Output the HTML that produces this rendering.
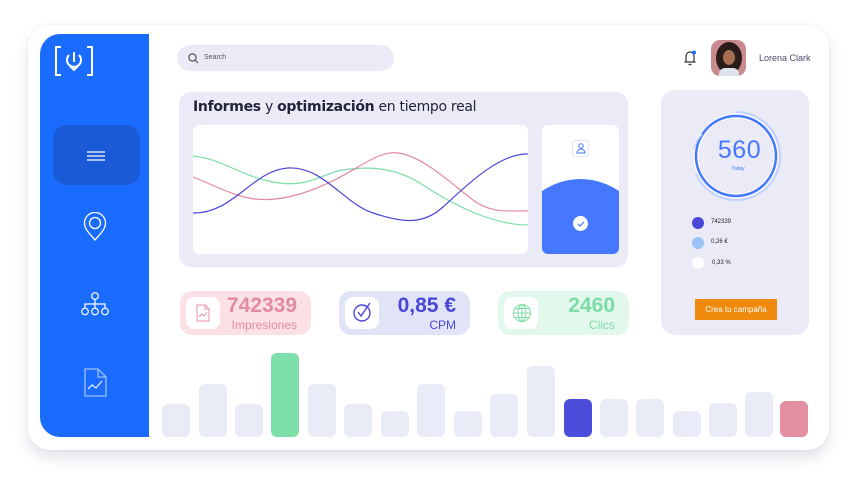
<!DOCTYPE html>
<html><head><meta charset="utf-8"><style>
*{margin:0;padding:0;box-sizing:border-box}
body{width:867px;height:492px;background:#fff;position:relative;overflow:hidden;font-family:"Liberation Sans",sans-serif}
.abs{position:absolute}
.card{left:28px;top:25px;width:801px;height:425px;background:#fff;border-radius:22px;box-shadow:0 8px 14px rgba(120,130,160,.22),0 0 3px rgba(0,0,0,.06)}
.side{left:40px;top:34px;width:109px;height:403px;background:#1a6cff;border-radius:20px 0 0 20px}
.bar{position:absolute;width:28px;border-radius:6px;background:#e9ebf7;bottom:55px}
.pill{border-radius:12px;height:44px;top:291px}
.ib{position:absolute;left:6px;top:6px;width:34px;height:32px;background:#fff;border-radius:8px}
.num{position:absolute;right:14px;top:3px;font-weight:bold;font-size:21px}
.lab{position:absolute;right:14px;top:27px;font-size:12px}
</style></head><body>
<div class="abs card"></div>
<div class="abs side"></div>
<!-- logo -->
<svg class="abs" style="left:55px;top:46px" width="38" height="30" viewBox="0 0 38 30" fill="none" stroke="#fff" stroke-width="2"><path d="M6 1H1V29H6M32 1H37V29H32"/><path d="M14 9a7 7 0 1 0 10 0"/><path d="M19 6V16"/><path d="M15 20l4 4 4-4"/></svg>
<div class="abs" style="left:53px;top:125px;width:87px;height:60px;background:#1a5ad6;border-radius:14px"></div>
<svg class="abs" style="left:87px;top:150px" width="18" height="12" stroke="#fff" stroke-width="1.3"><path d="M0 2H18M0 6H18M0 10H18"/></svg>
<svg class="abs" style="left:83px;top:212px" width="24" height="30" fill="none" stroke="#fff" stroke-width="1.3"><path d="M12 28C6 21 1.5 17 1.5 11a10.5 10.5 0 0 1 21 0c0 6-4.5 10-10.5 17z"/><circle cx="12" cy="11" r="5.5"/></svg>
<svg class="abs" style="left:80px;top:292px" width="30" height="26" fill="none" stroke="#fff" stroke-width="1.2"><circle cx="15" cy="4" r="3.3"/><path d="M15 7.5V12M5 16V12H25V16M15 12V16"/><circle cx="5" cy="19.5" r="3.3"/><circle cx="15" cy="19.5" r="3.3"/><circle cx="25" cy="19.5" r="3.3"/></svg>
<svg class="abs" style="left:84px;top:368px" width="24" height="30" fill="none" stroke="#9fc0ff" stroke-width="1.3"><path d="M1 1H14L22 9V28H1Z M14 1V9H22"/><path d="M4 21l4-4 4 3 6-7" stroke="#dfe9ff"/></svg>
<!-- search -->
<div class="abs" style="left:177px;top:45px;width:217px;height:26px;background:#eaebf7;border-radius:13px"></div>
<svg class="abs" style="left:188px;top:53px" width="11" height="11" fill="none" stroke="#555" stroke-width="1.2"><circle cx="4.5" cy="4.5" r="3.6"/><path d="M7.2 7.2L10 10"/></svg>
<div class="abs" style="left:204px;top:54px;font-size:7px;color:#555">Search</div>
<!-- header right -->
<svg class="abs" style="left:683px;top:50px" width="14" height="16" fill="none" stroke="#333" stroke-width="1.2"><path d="M3 12V6a4 4 0 0 1 8 0v6ZM1.5 12H12.5M5.5 14.5h3"/><circle cx="11" cy="2.5" r="2" fill="#1a6cff" stroke="none"/></svg>
<div class="abs" style="left:711px;top:40px;width:35px;height:36px;border-radius:9px;background:#c98a8f;overflow:hidden"><div style="position:absolute;left:5px;top:2px;width:26px;height:32px;border-radius:50%;background:#2a1c18"></div><div style="position:absolute;left:12px;top:10px;width:12px;height:15px;border-radius:50%;background:#a66e52"></div><div style="position:absolute;left:8px;top:28px;width:20px;height:10px;border-radius:6px 6px 0 0;background:#dfe3ea"></div></div>
<div class="abs" style="left:759px;top:53px;font-size:9px;color:#4a4a6a">Lorena Clark</div>
<!-- chart panel -->
<div class="abs" style="left:179px;top:92px;width:449px;height:175px;background:#eaebf7;border-radius:12px"></div>
<div class="abs" style="left:193px;top:99px;font-size:14px;color:#23233a;font-family:'DejaVu Sans',sans-serif;letter-spacing:-.3px"><b>Informes</b> y <b>optimización</b> en tiempo real</div>
<div class="abs" style="left:193px;top:125px;width:335px;height:129px;background:#fff;border-radius:6px"></div>
<svg class="abs" style="left:193px;top:125px" width="335" height="129" fill="none" stroke-width="1.2">
<path d="M0 31C30 34 45 50 80 57S130 48 150 45S200 40 230 60S300 100 335 100" stroke="#7ddca6"/>
<path d="M0 52C40 68 60 84 110 68S180 25 205 28S260 60 280 75S320 85 335 86" stroke="#e48aa0"/>
<path d="M0 88C40 89 60 45 95 43S150 78 180 88S230 100 250 82S305 28 335 29" stroke="#4a47d8"/>
</svg>
<div class="abs" style="left:542px;top:125px;width:77px;height:129px;background:#fff;border-radius:6px;overflow:hidden"><div style="position:absolute;left:-30px;top:54px;width:137px;height:140px;border-radius:50%;background:#4578ff"></div></div>
<div class="abs" style="left:572px;top:140px;width:17px;height:17px;border:1px solid #e0e4f5;border-radius:3px"></div>
<svg class="abs" style="left:576px;top:143px" width="10" height="11" fill="none" stroke="#4578ff" stroke-width="1"><circle cx="5" cy="3" r="2.2"/><path d="M1 10a4 4 0 0 1 8 0Z"/></svg>
<div class="abs" style="left:573px;top:216px;width:15px;height:15px;border-radius:50%;background:#fff"></div>
<svg class="abs" style="left:577px;top:221px" width="8" height="6" fill="none" stroke="#4578ff" stroke-width="1.2"><path d="M1 3l2 2 4-4"/></svg>
<!-- pills -->
<div class="abs pill" style="left:180px;width:131px;background:#fbe0e6"><div class="ib"></div>
<svg class="abs" style="left:16px;top:13px" width="14" height="18" fill="none" stroke="#e890a6" stroke-width="1"><path d="M1 1H9L13 5V17H1ZM9 1V5H13"/><path d="M3 13l3-3 2 2 3-4"/></svg>
<div class="num" style="color:#e38aa0;font-size:21px">742339</div><div class="lab" style="color:#e38aa0">Impresiones</div></div>
<div class="abs pill" style="left:339px;width:131px;background:#e1e4f7"><div class="ib"></div>
<svg class="abs" style="left:13px;top:10px" width="22" height="22" fill="none" stroke="#4a47d8" stroke-width="1.4"><circle cx="10" cy="12" r="8"/><path d="M6 11l3 4 9-13"/></svg>
<div class="num" style="color:#4a47d8">0,85 €</div><div class="lab" style="color:#4a47d8">CPM</div></div>
<div class="abs pill" style="left:498px;width:131px;background:#e2f8ec"><div class="ib"></div>
<svg class="abs" style="left:14px;top:12px" width="20" height="20" fill="none" stroke="#7ddca6" stroke-width="1"><circle cx="10" cy="10" r="8.5"/><ellipse cx="10" cy="10" rx="4" ry="8.5"/><path d="M1.5 10H18.5M10 1.5V18.5M3 5.5H17M3 14.5H17"/></svg>
<div class="num" style="color:#7ddca6">2460</div><div class="lab" style="color:#7ddca6">Clics</div></div>
<!-- right panel -->
<div class="abs" style="left:661px;top:90px;width:148px;height:245px;background:#eaebf7;border-radius:14px"></div>
<svg class="abs" style="left:688px;top:108px" width="96" height="96" fill="none"><circle cx="48" cy="48" r="40" stroke="#fff" stroke-width="5"/><circle cx="48" cy="48" r="40" stroke="#4578ff" stroke-width="2.5"/><path d="M48 4A44 44 0 1 1 8 66" stroke="#c4d2ff" stroke-width="2"/><path d="M6 40a42 42 0 0 1 8 -14" stroke="#c4d2ff" stroke-width="1.5"/></svg>
<div class="abs" style="left:688px;top:136px;width:103px;text-align:center;font-size:25px;color:#4578ff;letter-spacing:.5px">560</div>
<div class="abs" style="left:688px;top:166px;width:100px;text-align:center;font-size:5px;color:#4578ff">Today</div>
<div class="abs" style="left:692px;top:217px;width:12px;height:12px;border-radius:50%;background:#4a47d8"></div>
<div class="abs" style="left:692px;top:237px;width:12px;height:12px;border-radius:50%;background:#9cc2f7"></div>
<div class="abs" style="left:692px;top:257px;width:12px;height:12px;border-radius:50%;background:#fff"></div>
<div class="abs" style="left:711px;top:219px;font-size:6px;color:#222">742339</div>
<div class="abs" style="left:711px;top:239px;font-size:6px;color:#222">0,26 €</div>
<div class="abs" style="left:712px;top:260px;font-size:6px;color:#222">0,33 %</div>
<div class="abs" style="left:695px;top:299px;width:82px;height:21px;background:#f08a0c;color:#fff;font-size:8px;text-align:center;line-height:21px">Crea tu campaña</div>
<!-- bars -->
<div class="bar" style="left:162px;height:33px"></div>
<div class="bar" style="left:199px;height:53px"></div>
<div class="bar" style="left:235px;height:33px"></div>
<div class="bar" style="left:271px;height:84px;background:#7ddfa9"></div>
<div class="bar" style="left:308px;height:53px"></div>
<div class="bar" style="left:344px;height:33px"></div>
<div class="bar" style="left:381px;height:26px"></div>
<div class="bar" style="left:417px;height:53px"></div>
<div class="bar" style="left:454px;height:26px"></div>
<div class="bar" style="left:490px;height:43px"></div>
<div class="bar" style="left:527px;height:71px"></div>
<div class="bar" style="left:564px;height:38px;background:#4d4ddb"></div>
<div class="bar" style="left:600px;height:38px"></div>
<div class="bar" style="left:636px;height:38px"></div>
<div class="bar" style="left:673px;height:26px"></div>
<div class="bar" style="left:709px;height:34px"></div>
<div class="bar" style="left:745px;height:45px"></div>
<div class="bar" style="left:780px;height:36px;background:#e48ea4"></div>
</body></html>
